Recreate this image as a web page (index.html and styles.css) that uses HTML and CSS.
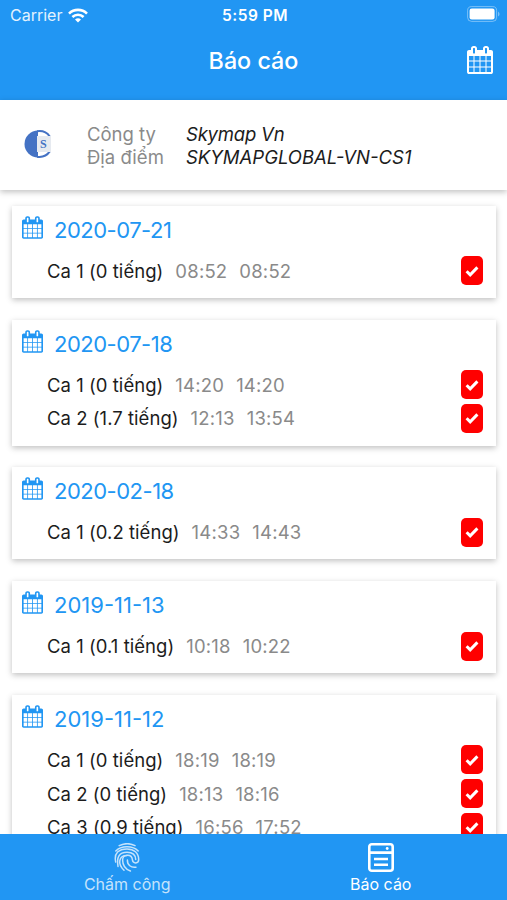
FILE: index.html
```html
<!DOCTYPE html>
<html lang="vi">
<head>
    <meta charset="UTF-8">
    <meta name="viewport" content="width=device-width, initial-scale=1.0">
    <title>Báo cáo</title>
    <link rel="stylesheet" href="styles.css">
</head>
<body>
    <svg class="symbols" xmlns="http://www.w3.org/2000/svg">
        <symbol id="calendar" viewBox="0 0 1664 1792">
            <path d="M128 1664h288v-288h-288v288zm352 0h320v-288h-320v288zm-352-352h288v-320h-288v320zm352 0h320v-320h-320v320zm-352-384h288v-288h-288v288zm736 736h320v-288h-320v288zm-384-736h320v-288h-320v288zm768 736h288v-288h-288v288zm-384-352h320v-320h-320v320zm-352-864v-288q0-13-9.5-22.5t-22.5-9.5h-64q-13 0-22.5 9.5t-9.5 22.5v288q0 13 9.5 22.5t22.5 9.5h64q13 0 22.5-9.5t9.5-22.5zm736 864h288v-320h-288v320zm-384-384h320v-288h-320v288zm384 0h288v-288h-288v288zm32-480v-288q0-13-9.5-22.5t-22.5-9.5h-64q-13 0-22.5 9.5t-9.5 22.5v288q0 13 9.5 22.5t22.5 9.5h64q13 0 22.5-9.5t9.5-22.5zm384-64v1280q0 52-38 90t-90 38h-1408q-52 0-90-38t-38-90v-1280q0-52 38-90t90-38h128v-96q0-66 47-113t113-47h64q66 0 113 47t47 113v96h384v-96q0-66 47-113t113-47h64q66 0 113 47t47 113v96h128q52 0 90 38t38 90z"/>
        </symbol>
        <symbol id="check" viewBox="0 0 14 12">
            <path d="M1.6 6.2l3.6 3.6 7.2-7.4" fill="none" stroke="#fff" stroke-width="3"/>
        </symbol>
    </svg>

    <header class="header">
        <div class="status-bar">
            <div class="carrier">
                <span>Carrier</span>
                <svg class="wifi" viewBox="0 0 20 15">
                    <g fill="none" stroke="#fff" stroke-width="2.6">
                        <path d="M1 5.6a12.8 12.8 0 0 1 18 0"/>
                        <path d="M4.4 9a8 8 0 0 1 11.2 0"/>
                    </g>
                    <path d="M10 14.6l-3-3a4.3 4.3 0 0 1 6 0z" fill="#fff"/>
                </svg>
            </div>
            <div class="time">5:59 PM</div>
            <svg class="battery" viewBox="0 0 33 16">
                <rect x=".6" y=".6" width="29" height="14.8" rx="4" fill="none" stroke="#fff" stroke-opacity=".4"/>
                <rect x="2.6" y="2.6" width="25" height="10.8" rx="2.2" fill="#fff"/>
                <path d="M31 5.5q1.6 1 1.6 2.5t-1.6 2.5z" fill="#fff" fill-opacity=".4"/>
            </svg>
        </div>
        <div class="title-bar">
            <h1>Báo cáo</h1>
            <svg class="header-calendar"><use href="#calendar"/></svg>
        </div>
    </header>

    <section class="company">
        <svg class="logo" viewBox="0 0 28 28">
            <path d="M14 .5a13.5 13.5 0 0 0 0 27z" fill="#4472c4"/>
            <path d="M13 1.3c5.5-.8 10 1.2 12.8 5.3M13 26.7c5.500.8 10-1.2 12.8-5.3" fill="none" stroke="#4472c4" stroke-width="2"/>
            <rect x="13" y="6" width="14" height="16" fill="#e6eaf0"/>
            <text x="16" y="18" class="logo-letter">S</text>
        </svg>
        <dl>
            <dt>Công ty</dt><dd class="company-name">Skymap Vn</dd>
            <dt>Địa điểm</dt><dd>SKYMAPGLOBAL-VN-CS1</dd>
        </dl>
    </section>

    <main class="list" id="list"></main>

    <nav class="tabs">
        <div class="tab">
            <svg class="tab-icon" viewBox="0 0 26 29" fill="none" stroke="currentColor" stroke-width="1.5" stroke-linecap="round">
                <path d="M5.2 2.700C10 .3 16.500.3 21 2.700"/>
                <path d="M1.800 8C7 2.300 19 2.300 24.200 8"/>
                <path d="M1.700 19C-.3 10 5 5.900 13 5.900c7 0 11.700 4.200 11.700 10.600 0 4.500-5.900 4.500-6.300.3-.5-6.500-9.800-6-9.800.2 0 5 3 9.200 7.800 11"/>
                <path d="M4 23.500C2.500 14 5 9.300 13 9.300c5.500 0 8.600 3 8.700 7.300"/>
                <path d="M10 27.300C3.500 21 4.300 12.600 13 12.600"/>
                <path d="M13.400 17c-.2 5 3.600 8 8.600 7.200"/>
            </svg>
            <span>Chấm công</span>
        </div>
        <div class="tab active">
            <svg class="tab-icon" viewBox="0 0 26 29" fill="none" stroke="currentColor" stroke-width="2.6">
                <rect x="1.3" y="1.3" width="23.4" height="26.4" rx="2.5"/>
                <path d="M2 9.6h22M6 16h14M6 21.8h14"/>
                <circle cx="19.2" cy="5.5" r="1.4" fill="currentColor" stroke="none"/>
            </svg>
            <span>Báo cáo</span>
        </div>
    </nav>

    <script>
        const days = [
            { date: '2020-07-21', shifts: [['0', '08:52', '08:52']] },
            { date: '2020-07-18', shifts: [['0', '14:20', '14:20'], ['1.7', '12:13', '13:54']] },
            { date: '2020-02-18', shifts: [['0.2', '14:33', '14:43']] },
            { date: '2019-11-13', shifts: [['0.1', '10:18', '10:22']] },
            { date: '2019-11-12', shifts: [['0', '18:19', '18:19'], ['0', '18:13', '18:16'], ['0.9', '16:56', '17:52']] }
        ];

        document.getElementById('list').innerHTML = days.map(day => `
            <article class="card">
                <h2 class="year-${day.date.slice(0, 4)}"><svg class="card-calendar"><use href="#calendar"/></svg><span>${day.date}</span></h2>
                ${day.shifts.map(([hours, start, end], i) => `
                <div class="shift">
                    <span class="name">Ca ${i + 1} (${hours} tiếng)</span>
                    <span class="hour">${start}</span>
                    <span class="hour">${end}</span>
                    <span class="badge"><svg><use href="#check"/></svg></span>
                </div>`).join('')}
            </article>`).join('');
    </script>
</body>
</html>
```
FILE: styles.css
```css
* {
    box-sizing: border-box;
}
body {
    margin: 0;
    height: 900px;
    display: flex;
    flex-direction: column;
    overflow: hidden;
    font-family: Inter, "Noto Sans", sans-serif;
    background: #fff;
    color: #1c1c1c;
}
h1, h2, dl, dd {
    margin: 0;
    font-weight: 400;
}
.symbols {
    display: none;
}
.header {
    flex: none;
    height: 100px;
    background: #2196f3;
    color: #fff;
}
.status-bar, .title-bar {
    display: grid;
    grid-template-columns: 1fr auto 1fr;
    align-items: center;
}
.status-bar {
    height: 30px;
    padding: 0 7px 0 10px;
    font-size: 16px;
}
.carrier {
    display: flex;
    align-items: center;
    gap: 6px;
    color: #e3f2fe;
}
.wifi {
    width: 20px;
    height: 15px;
}
.time {
    font-weight: 600;
    font-size: 15.5px;
    letter-spacing: .5px;
}
.battery {
    width: 33px;
    height: 16px;
    justify-self: end;
    margin-top: -2px;
}
.title-bar {
    height: 60px;
    padding-right: 14px;
}
.title-bar h1 {
    grid-column: 2;
    padding-left: 14px;
    font-size: 23.3px;
    font-weight: 500;
}
.header-calendar {
    width: 26px;
    height: 28px;
    justify-self: end;
    fill: #fff;
}
.company {
    flex: none;
    height: 90px;
    display: flex;
    align-items: center;
    padding-left: 24px;
    background: #fff;
    box-shadow: 0 2px 6px rgba(0, 0, 0, .25);
    font-size: 18.5px;
    line-height: 23px;
}
.logo {
    width: 28px;
    height: 28px;
    margin: -2px 35px 0 0;
}
.logo-letter {
    font-family: "Liberation Serif", serif;
    font-size: 12px;
    font-weight: 700;
    fill: #4472c4;
}
.company dl {
    display: grid;
    grid-template-columns: 99px auto;
    padding-top: 1px;
}
.company dt {
    color: #8a8a8a;
}
.company dd {
    font-style: italic;
}
.company-name {
    letter-spacing: -.2px;
}
.list {
    flex: 1;
    min-height: 0;
    overflow: hidden;
    padding: 16px 11px 0 12px;
}
.card {
    margin-bottom: 21.7px;
    padding: 6px 13px 10.3px 10px;
    background: #fff;
    box-shadow: 0 2px 6px rgba(0, 0, 0, .25);
}
.card h2 {
    height: 42px;
    display: flex;
    align-items: flex-start;
    gap: 11px;
    font-size: 22px;
    line-height: 36px;
    letter-spacing: -.5px;
    color: #2196f3;
}
.card .year-2019 {
    letter-spacing: 0;
}
.card-calendar {
    width: 21px;
    height: 23px;
    margin-top: 4px;
    fill: #2196f3;
}
.shift {
    height: 33.8px;
    display: flex;
    align-items: center;
    padding-left: 25px;
    font-size: 18.5px;
}
.name {
    letter-spacing: .04px;
}
.hour {
    margin-left: 12px;
    letter-spacing: .2px;
    color: #8a8a8a;
}
.badge {
    width: 22px;
    height: 29px;
    margin-left: auto;
    display: flex;
    align-items: center;
    justify-content: center;
    border-radius: 5px;
    background: #f00;
}
.badge svg {
    width: 14px;
    height: 12px;
}
.tabs {
    flex: none;
    height: 66px;
    display: flex;
    background: #2196f3;
    color: #fff;
}
.tab {
    flex: 1;
    display: flex;
    flex-direction: column;
    align-items: center;
    padding: 9px 0 0 1px;
    font-size: 16px;
    line-height: 24px;
    color: #c5e3fc;
}
.tab.active {
    color: #fff;
}
.tab-icon {
    width: 26px;
    height: 29px;
}
```
